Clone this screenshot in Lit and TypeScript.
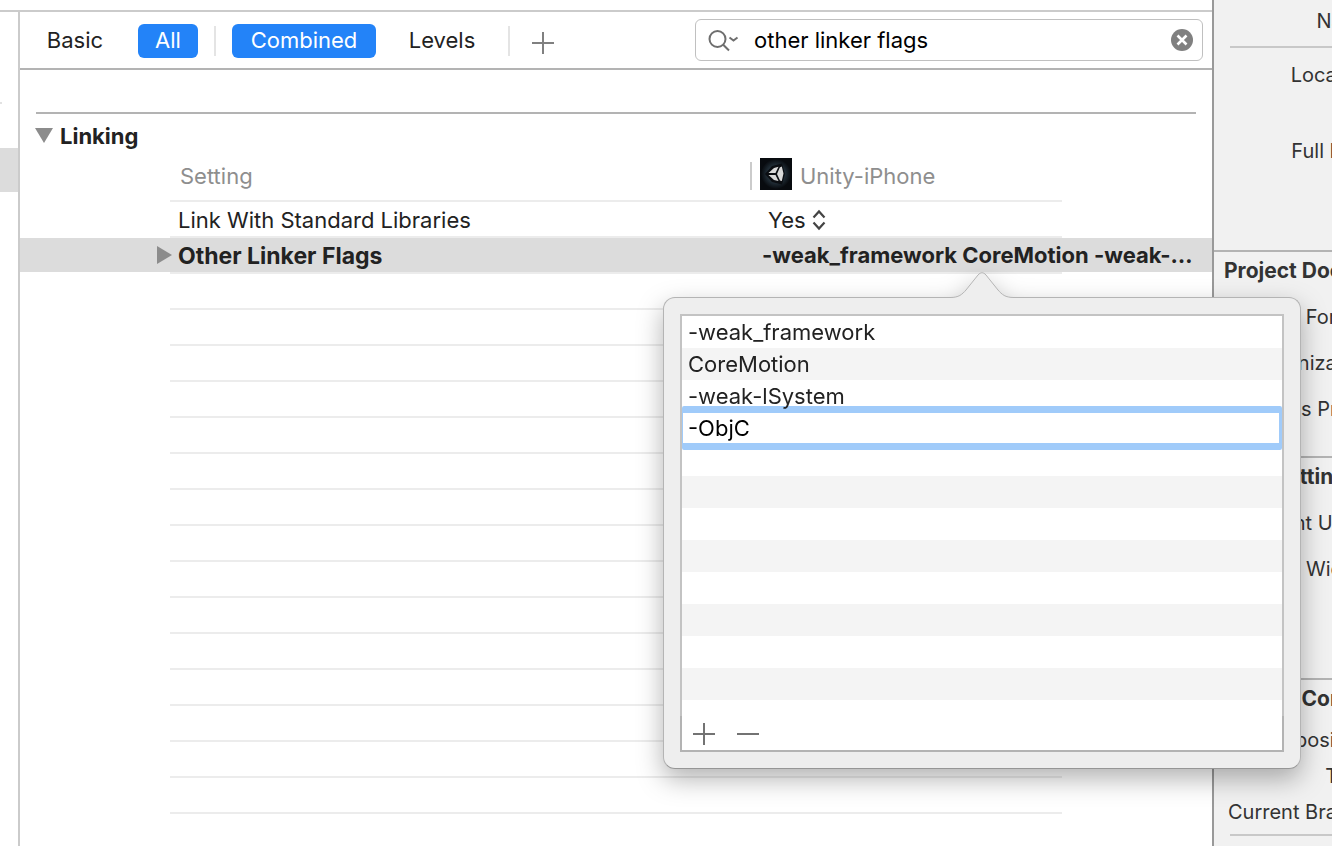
import { LitElement, html, css } from "lit";
import { customElement, state } from "lit/decorators.js";

const plusIcon = html`<svg width="22" height="22" viewBox="0 0 22 22" aria-hidden="true">
  <path d="M11 0V22M0 11H22" stroke="currentColor" stroke-width="2" fill="none" />
</svg>`;

const minusIcon = html`<svg width="22" height="22" viewBox="0 0 22 22" aria-hidden="true">
  <path d="M0 11H22" stroke="currentColor" stroke-width="2" fill="none" />
</svg>`;

@customElement("flags-popover")
class FlagsPopover extends LitElement {
  @state() private flags = ["-weak_framework", "CoreMotion", "-weak-lSystem", "-ObjC"];
  private editing = 3;

  static styles = css`
    :host {
      display: block;
      width: 638px;
      color: #222;
      font-size: 22px;
      font-weight: 400;
      filter: drop-shadow(0 10px 13px rgba(0, 0, 0, 0.3));
    }
    * {
      box-sizing: border-box;
    }
    .arrow {
      display: block;
      margin: 0 auto -1px;
      position: relative;
      z-index: 1;
    }
    .panel {
      padding: 16px;
      background: #eeeeee;
      border: 1px solid #b4b4b4;
      border-bottom-color: #969696;
      border-radius: 12px;
    }
    ul {
      list-style: none;
      margin: 0;
      padding: 0;
      height: 402px;
      background: #fff;
      border: 2px solid #c3c3c3;
      border-bottom: 0;
    }
    li {
      height: 32px;
      padding: 0 6px;
      line-height: 32px;
      white-space: pre;
    }
    li:nth-child(even) {
      background: #f4f4f4;
    }
    li.editing {
      padding: 0;
    }
    li span {
      position: relative;
      z-index: 1;
    }
    input {
      display: block;
      position: relative;
      top: -6px;
      width: 100%;
      height: 44px;
      margin: 0;
      padding: 0 5px;
      border: solid #a0cbfa;
      border-width: 7px 3px 7px 1px;
      border-radius: 2px;
      outline: none;
      background: #fff;
      color: #000;
      font: inherit;
    }
    .actions {
      display: flex;
      gap: 22px;
      height: 36px;
      padding: 7px 11px 0;
      background: #fff;
      border: 2px solid #b3b3b3;
      border-top: 0;
    }
    button {
      display: block;
      width: 22px;
      height: 22px;
      margin: 0;
      padding: 0;
      border: 0;
      background: none;
      color: #737373;
    }
    button svg {
      display: block;
    }
  `;

  private add() {
    this.flags = [...this.flags, ""];
  }

  private remove() {
    this.flags = this.flags.slice(0, -1);
  }

  render() {
    const blanks = Array.from({ length: Math.max(0, 12 - this.flags.length) });
    return html`
      <svg class="arrow" width="64" height="27" viewBox="0 0 64 27" aria-hidden="true">
        <path d="M0 27V26.500C9 26.500 12 23.500 16 19L28 4C30.500 1 33.500 1 36 4L48 19C52 23.500 55 26.500 64 26.500V27Z" fill="#eeeeee" />
        <path d="M0 26.500C9 26.500 12 23.500 16 19L28 4C30.500 1 33.500 1 36 4L48 19C52 23.500 55 26.500 64 26.500" fill="none" stroke="#b4b4b4" />
      </svg>
      <div class="panel">
        <ul>
          ${this.flags.map((flag, i) =>
            i === this.editing
              ? html`<li class="editing"><input type="text" aria-label="Linker flag" spellcheck="false" .value=${flag} /></li>`
              : html`<li><span>${flag}</span></li>`
          )}
          ${blanks.map(() => html`<li aria-hidden="true"></li>`)}
        </ul>
        <div class="actions">
          <button type="button" aria-label="Add flag" @click=${this.add}>${plusIcon}</button>
          <button type="button" aria-label="Remove flag" @click=${this.remove}>${minusIcon}</button>
        </div>
      </div>
    `;
  }
}

@customElement("file-inspector")
class FileInspector extends LitElement {
  static styles = css`
    :host {
      display: block;
      overflow: hidden;
      background: #f1f1f1;
      border-left: 2px solid #999;
      color: #333;
      font-size: 20px;
      line-height: 24px;
      white-space: nowrap;
    }
    * {
      box-sizing: border-box;
    }
    section + section {
      border-top: 2px solid #b3b3b3;
    }
    h2 {
      margin: 0 0 4px;
      padding-left: 10px;
      font-size: 21px;
      line-height: 38px;
      font-weight: 700;
    }
    .row {
      width: 158px;
      line-height: 46px;
      text-align: right;
    }
    .identity {
      height: 250px;
    }
    .identity .row {
      line-height: 54px;
      margin-bottom: 22px;
    }
    .identity .row:first-child {
      line-height: 42px;
      margin: 0;
    }
    .document {
      padding-bottom: 24px;
    }
    .text {
      padding-bottom: 86px;
    }
    .source .row {
      line-height: 36px;
    }
    hr {
      height: 2px;
      margin: 4px 0 0 16px;
      border: 0;
      background: #c8c8c8;
    }
  `;

  private rows(labels: string[]) {
    return labels.map((label) => html`<div class="row">${label}</div>`);
  }

  render() {
    return html`
      <section class="identity">
        <div class="row">Name</div>
        <hr />
        ${this.rows(["Location", "Full Path"])}
      </section>
      <section class="document">
        <h2>Project Document</h2>
        ${this.rows(["Project Format", "Organization", "Class Prefix"])}
      </section>
      <section class="text">
        <h2>Text Settings</h2>
        ${this.rows(["Indent Using", "Widths"])}
      </section>
      <section class="source">
        <h2>Source Control</h2>
        ${this.rows(["Repository", "Type", "Current Branch"])}
        <hr />
      </section>
    `;
  }
}

@customElement("app-root")
class AppRoot extends LitElement {
  @state() private filter = "other linker flags";

  static styles = css`
    :host {
      display: grid;
      grid-template-columns: minmax(0, 1fr) 120px;
      min-height: 100vh;
      overflow: hidden;
      box-sizing: border-box;
      background: #fff;
      color: #222;
      font-family: Inter, "Liberation Sans", sans-serif;
      font-size: 22px;
      line-height: 28px;
    }
    * {
      box-sizing: border-box;
    }
    button {
      margin: 0;
      padding: 0;
      border: 0;
      background: none;
      color: inherit;
      font: inherit;
    }
    svg {
      display: block;
    }
    .work {
      display: flex;
      flex-direction: column;
      padding-top: 10px;
    }
    .split {
      display: flex;
      flex: 1;
      border-top: 2px solid #cbcbcb;
    }
    .navigator {
      width: 20px;
      padding-top: 90px;
      border-right: 2px solid #cbcbcb;
    }
    .tick {
      width: 2px;
      height: 2px;
      background: #e2e2e2;
    }
    .selected {
      height: 44px;
      margin-top: 44px;
      background: #dcdcdc;
    }
    .editor {
      flex: 1;
      min-width: 0;
    }
    .toolbar {
      display: flex;
      align-items: center;
      gap: 16px;
      height: 58px;
      padding: 1px 9px 0 8px;
      border-bottom: 2px solid #b3b3b3;
    }
    .scope {
      height: 34px;
      padding-bottom: 2px;
      border-radius: 6px;
      line-height: 32px;
      text-align: center;
    }
    .scope[aria-pressed="true"] {
      background: #2383f8;
      color: #fff;
    }
    .basic {
      width: 94px;
    }
    .all {
      width: 60px;
    }
    .combined {
      width: 144px;
    }
    .levels {
      width: 100px;
    }
    .bar {
      width: 2px;
      height: 30px;
      background: #e4e4e4;
    }
    .add {
      padding: 4px 6px 0;
      color: #808080;
    }
    .search {
      display: flex;
      align-items: center;
      flex: 0 1 508px;
      gap: 14px;
      height: 42px;
      margin: 0 0 2px auto;
      padding: 0 9px 0 12px;
      border: 1px solid #c0c0c0;
      border-radius: 6px;
    }
    .search input {
      flex: 1;
      min-width: 0;
      padding: 0;
      border: 0;
      outline: none;
      background: none;
      color: #000;
      font: inherit;
    }
    .group {
      display: flex;
      align-items: center;
      gap: 8px;
      height: 42px;
      margin: 42px 16px 0;
      border-top: 2px solid #b3b3b3;
    }
    .group svg {
      margin-top: 2px;
      overflow: visible;
    }
    h1 {
      margin: 0;
      font-size: 22px;
      line-height: 28px;
      font-weight: 700;
    }
    .group h1 {
      padding-top: 4px;
    }
    table {
      width: 100%;
      table-layout: fixed;
      border-spacing: 0;
    }
    .gutter {
      width: 150px;
    }
    .value {
      width: 312px;
    }
    th,
    td {
      height: 36px;
      padding: 0;
      border-bottom: 2px solid #ececec;
      background-clip: padding-box;
      font-weight: 400;
      text-align: left;
      white-space: nowrap;
    }
    tbody th {
      padding: 2px 0 0 8px;
    }
    tr > :first-child,
    tr > :last-child {
      border-color: transparent;
    }
    thead th {
      height: 48px;
      padding-bottom: 2px;
      color: #8e8e8e;
    }
    thead th:nth-child(2) {
      padding-left: 10px;
    }
    .target {
      display: flex;
      align-items: center;
      gap: 8px;
    }
    .target svg {
      margin-bottom: 4px;
    }
    .target .bar {
      height: 28px;
      background: #cbcbcb;
    }
    .popup {
      display: flex;
      align-items: center;
      gap: 6px;
      padding: 2px 0 0 18px;
    }
    select {
      appearance: none;
      margin: 0;
      padding: 0;
      border: 0;
      background: none;
      color: inherit;
      font: inherit;
    }
    .current > * {
      background-color: #dcdcdc;
      font-weight: 700;
    }
    .current > th {
      font-size: 23px;
    }
    .expand {
      display: block;
      margin: 0 -2px 0 auto;
    }
    .anchor {
      position: relative;
      width: 440px;
      margin-left: 12px;
    }
    flags-popover {
      position: absolute;
      z-index: 2;
      top: 30px;
      left: 50%;
      transform: translateX(-50%);
    }
  `;

  private onFilter(e: Event) {
    this.filter = (e.target as HTMLInputElement).value;
  }

  private clearFilter() {
    this.filter = "";
  }

  private unityIcon() {
    return html`<svg width="32" height="32" viewBox="0 0 32 32" aria-hidden="true">
      <defs>
        <radialGradient id="glow">
          <stop offset="0.4" stop-color="#2c3d49" />
          <stop offset="1" stop-color="#080b0f" />
        </radialGradient>
      </defs>
      <rect width="32" height="32" fill="#080b0f" />
      <circle cx="16" cy="16" r="15" fill="url(#glow)" />
      <path d="M5 16L12 8L22 5.500L25 16L22 26.500L12 24Z" fill="#0b0e12" />
      <path d="M8.500 15L14 10L18.500 8.800L15.500 15Z M19.800 9.500L21.800 8.500L23.500 15.500L21.800 23L20 22.500L17 16Z M8.500 17H15.500L18.500 23L14 22Z" fill="#dadada" />
    </svg>`;
  }

  render() {
    return html`
      <main class="work">
        <div class="split">
          <div class="navigator">
            <div class="tick"></div>
            <div class="selected"></div>
          </div>
          <div class="editor">
            <div class="toolbar">
              <button type="button" class="scope basic" aria-pressed="false">Basic</button>
              <button type="button" class="scope all" aria-pressed="true">All</button>
              <span class="bar"></span>
              <button type="button" class="scope combined" aria-pressed="true">Combined</button>
              <button type="button" class="scope levels" aria-pressed="false">Levels</button>
              <span class="bar"></span>
              <button type="button" class="add" aria-label="Add build setting">${plusIcon}</button>
              <div class="search">
                <svg width="32" height="24" viewBox="0 0 32 24" aria-hidden="true">
                  <g fill="none" stroke="#6e6e6e" stroke-width="2">
                    <circle cx="9.500" cy="11" r="8" />
                    <path d="M15.200 16.800L21 22.500" />
                    <path d="M21.500 9.500L25.500 12.500L29.500 9.500" />
                  </g>
                </svg>
                <input type="text" aria-label="Filter settings" spellcheck="false" .value=${this.filter} @input=${this.onFilter} />
                <button type="button" aria-label="Clear filter" @click=${this.clearFilter}>
                  <svg width="22" height="22" viewBox="0 0 22 22" aria-hidden="true">
                    <circle cx="11" cy="11" r="11" fill="#808080" />
                    <path d="M6.500 6.500L15.500 15.500M15.500 6.500L6.500 15.500" stroke="#fff" stroke-width="2.600" />
                  </svg>
                </button>
              </div>
            </div>
            <div class="group">
              <button type="button" aria-label="Collapse Linking">
                <svg width="16" height="15" viewBox="0 0 16 15" aria-hidden="true">
                  <path d="M-1 0H17L8 15Z" fill="#8c8c8c" />
                </svg>
              </button>
              <h1>Linking</h1>
            </div>
            <table>
              <colgroup>
                <col class="gutter" />
                <col />
                <col class="value" />
                <col class="gutter" />
              </colgroup>
              <thead>
                <tr>
                  <th></th>
                  <th scope="col">Setting</th>
                  <th scope="col">
                    <div class="target"><span class="bar"></span>${this.unityIcon()}<span>Unity-iPhone</span></div>
                  </th>
                  <th></th>
                </tr>
              </thead>
              <tbody>
                <tr>
                  <td></td>
                  <th scope="row"><label for="link-std">Link With Standard Libraries</label></th>
                  <td>
                    <div class="popup">
                      <select id="link-std">
                        <option selected>Yes</option>
                        <option>No</option>
                      </select>
                      <svg width="14" height="22" viewBox="0 0 14 22" aria-hidden="true">
                        <path d="M1.500 8.500L7 2.500L12.500 8.500M1.500 13.500L7 19.500L12.500 13.500" fill="none" stroke="#444" stroke-width="2.200" />
                      </svg>
                    </div>
                  </td>
                  <td></td>
                </tr>
                <tr class="current">
                  <td>
                    <button type="button" class="expand" aria-label="Expand Other Linker Flags">
                      <svg width="15" height="18" viewBox="0 0 15 18" aria-hidden="true">
                        <path d="M0 0L15 9L0 18Z" fill="#8c8c8c" />
                      </svg>
                    </button>
                  </td>
                  <th scope="row">Other Linker Flags</th>
                  <td>
                    <div class="anchor">
                      <div>-weak_framework CoreMotion -weak-…</div>
                      <flags-popover></flags-popover>
                    </div>
                  </td>
                  <td></td>
                </tr>
                ${Array.from({ length: 15 }).map(
                  () => html`<tr aria-hidden="true"><td></td><td></td><td></td><td></td></tr>`
                )}
              </tbody>
            </table>
          </div>
        </div>
      </main>
      <file-inspector></file-inspector>
    `;
  }
}
